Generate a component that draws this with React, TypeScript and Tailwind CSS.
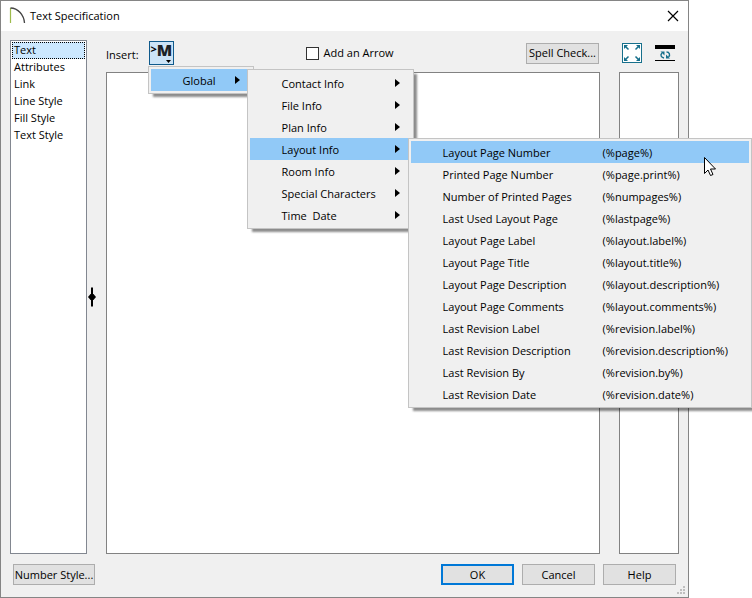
import React from "react";
import { clsx } from "clsx";

const SECTIONS = ["Text", "Attributes", "Link", "Line Style", "Fill Style", "Text Style"];

const CATEGORIES = [
  "Contact Info",
  "File Info",
  "Plan Info",
  "Layout Info",
  "Room Info",
  "Special Characters",
  "Time  Date",
];

const LAYOUT_MACROS = [
  { label: "Layout Page Number", macro: "(%page%)" },
  { label: "Printed Page Number", macro: "(%page.print%)" },
  { label: "Number of Printed Pages", macro: "(%numpages%)" },
  { label: "Last Used Layout Page", macro: "(%lastpage%)" },
  { label: "Layout Page Label", macro: "(%layout.label%)" },
  { label: "Layout Page Title", macro: "(%layout.title%)" },
  { label: "Layout Page Description", macro: "(%layout.description%)" },
  { label: "Layout Page Comments", macro: "(%layout.comments%)" },
  { label: "Last Revision Label", macro: "(%revision.label%)" },
  { label: "Last Revision Description", macro: "(%revision.description%)" },
  { label: "Last Revision By", macro: "(%revision.by%)" },
  { label: "Last Revision Date", macro: "(%revision.date%)" },
];

const MENU =
  "absolute border border-[#c4c4c4] bg-[#f0f0f0] p-[2px] shadow-[4px_4px_2px_-1px_rgba(0,0,0,0.45)]";

function SubmenuArrow() {
  return (
    <svg className="h-2 w-[5px]" viewBox="0 0 5 8" aria-hidden="true">
      <path d="M0 0L5 4L0 8Z" fill="#000" />
    </svg>
  );
}

function LayoutMacroMenu() {
  return (
    <ul role="menu" aria-label="Layout Info" className={clsx(MENU, "top-0 left-[158px] w-[344px]")}>
      {LAYOUT_MACROS.map((item, i) => (
        <li key={item.macro} role="none">
          <button
            role="menuitem"
            className={clsx(
              "grid h-[22px] w-full grid-cols-[160px_1fr] items-center pt-px pl-8 text-left whitespace-nowrap",
              i === 0 && "bg-[#91c9f7]"
            )}
          >
            <span>{item.label}</span>
            <span>{item.macro}</span>
          </button>
        </li>
      ))}
    </ul>
  );
}

function CategoryMenu() {
  return (
    <ul role="menu" aria-label="Global" className={clsx(MENU, "top-0 left-24 w-[167px]")}>
      {CATEGORIES.map((name) => {
        const open = name === "Layout Info";
        return (
          <li key={name} role="none" className="relative">
            <button
              role="menuitem"
              aria-haspopup="menu"
              aria-expanded={open}
              className={clsx(
                "flex h-[22px] w-full items-center justify-between pr-[11px] pl-8 whitespace-pre",
                open && "bg-[#91c9f7]"
              )}
            >
              <span className="pt-px">{name}</span>
              <SubmenuArrow />
            </button>
            {open && <LayoutMacroMenu />}
          </li>
        );
      })}
    </ul>
  );
}

function InsertMacro() {
  return (
    <div className="relative z-10 ml-[10px]">
      <button
        aria-label="Insert macro"
        className="relative flex h-6 w-[25px] items-start border border-[#0f5a8c] bg-[#cce4f7] pl-px"
      >
        <span className="text-[11px] leading-[14px] font-bold">&gt;</span>
        <span className="text-base leading-4 font-extrabold text-[#1b2226]">M</span>
        <svg className="absolute right-[2px] bottom-px h-[3px] w-[5px]" viewBox="0 0 5 3" aria-hidden="true">
          <path d="M0 0H5L2.500 3Z" fill="#000" />
        </svg>
      </button>
      <ul role="menu" aria-label="Insert" className={clsx(MENU, "top-[25px] -left-px w-[106px]")}>
        <li role="none" className="relative">
          <button
            role="menuitem"
            aria-haspopup="menu"
            aria-expanded={true}
            className="flex h-[22px] w-full items-center justify-between bg-[#91c9f7] pr-[11px] pl-8"
          >
            <span className="pt-px">Global</span>
            <SubmenuArrow />
          </button>
          <CategoryMenu />
        </li>
      </ul>
    </div>
  );
}

function DialogButton({
  children,
  primary,
  className,
}: {
  children: React.ReactNode;
  primary?: boolean;
  className?: string;
}) {
  return (
    <button
      className={clsx(
        "h-[21px] bg-[#e1e1e1] leading-4 whitespace-nowrap",
        primary ? "border-2 border-[#0078d7]" : "border border-[#adadad]",
        className
      )}
    >
      {children}
    </button>
  );
}

export default function App() {
  return (
    <div className="relative min-h-screen overflow-hidden bg-white pr-[63px] font-['Open_Sans','Noto_Sans',sans-serif] text-[11px] leading-4 text-black">
      <div
        role="dialog"
        aria-label="Text Specification"
        className="flex min-h-screen flex-col border border-[#858585] bg-[#f0f0f0]"
      >
        <header className="flex h-[30px] items-center bg-white pr-[9px] pl-2">
          <svg className="h-[18px] w-[18px]" viewBox="0 0 18 18" aria-hidden="true">
            <path d="M1.500 1V16" stroke="#9dbb4c" strokeWidth="1.200" />
            <path d="M1.500 1C9 1 15 8 15.500 16" fill="none" stroke="#444" strokeWidth="1.300" />
          </svg>
          <h1 className="ml-[3px] grow">Text Specification</h1>
          <button aria-label="Close">
            <svg className="h-3 w-3" viewBox="0 0 12 12" aria-hidden="true">
              <path d="M1 1L11 11M11 1L1 11" stroke="#000" strokeWidth="1.200" />
            </svg>
          </button>
        </header>

        <div className="flex grow px-[9px] pt-[9px]">
          <ul role="listbox" aria-label="Pages" className="w-[77px] border border-[#828790] bg-white p-px">
            {SECTIONS.map((name, i) => (
              <li
                key={name}
                role="option"
                aria-selected={i === 0}
                className={clsx(
                  "h-[17px] border border-dotted pl-px leading-[13px]",
                  i === 0 ? "border-black bg-[#cce8ff]" : "border-transparent"
                )}
              >
                {name}
              </li>
            ))}
          </ul>

          <div role="separator" aria-orientation="vertical" className="flex w-[19px] items-center pl-px">
            <svg className="h-5 w-2" viewBox="0 0 8 20" aria-hidden="true">
              <path d="M4 0.500V19.500" stroke="#000" strokeWidth="2" />
              <path d="M0 10L2.500 7H5.500L8 10L5.500 13H2.500Z" fill="#000" />
            </svg>
          </div>

          <div className="flex grow flex-col">
            <div className="flex h-8 items-start pt-px">
              <div className="flex grow items-center">
                <span className="pt-1">Insert:</span>
                <InsertMacro />
                <label className="ml-[132px] flex items-center gap-[5px]">
                  <input
                    type="checkbox"
                    className="h-[13px] w-[13px] appearance-none border border-[#333] bg-white"
                  />
                  Add an Arrow
                </label>
                <DialogButton className="ml-auto w-[73px]">Spell Check...</DialogButton>
              </div>
              <div className="flex w-20 items-start gap-[13px] pt-[2px] pl-[23px]">
                <button aria-label="Fill window">
                  <svg className="block h-5 w-5" viewBox="0 0 20 20" aria-hidden="true">
                    <rect x="0.500" y="0.500" width="19" height="19" fill="#fff" stroke="#17708c" />
                    <path
                      d="M2 2H6L2 6ZM18 2V6L14 2ZM2 18V14L6 18ZM18 18H14L18 14Z"
                      fill="#17708c"
                    />
                    <path
                      d="M3 3L6.500 6.500M17 3L13.500 6.500M3 17L6.500 13.500M17 17L13.500 13.500"
                      stroke="#17708c"
                      strokeWidth="1.500"
                    />
                  </svg>
                </button>
                <button aria-label="Reverse colors" className="pt-[2px]">
                  <svg className="block h-4 w-5" viewBox="0 0 20 16" aria-hidden="true">
                    <path d="M0 2H20" stroke="#000" strokeWidth="4" />
                    <path d="M0 15.500H20" stroke="#000" />
                    <path
                      d="M9 13C6 12.500 5 10 7 8M11.500 7C14.500 7 15.500 10 13.500 12"
                      fill="none"
                      stroke="#17708c"
                      strokeWidth="1.400"
                    />
                    <path d="M5.500 6.500H9.500V10.500ZM15 13.500H11V9.500Z" fill="#17708c" />
                  </svg>
                </button>
              </div>
            </div>
            <div className="flex grow gap-[19px]">
              <textarea
                aria-label="Text"
                className="grow resize-none border border-[#828282] bg-white outline-none"
              />
              <div className="w-[60px] border border-[#828282] bg-white" />
            </div>
          </div>
        </div>

        <footer className="relative flex gap-2 pt-[10px] pr-3 pb-3 pl-3">
          <DialogButton className="mr-auto w-[82px]">Number Style...</DialogButton>
          <DialogButton primary className="w-[73px]">
            OK
          </DialogButton>
          <DialogButton className="w-[73px]">Cancel</DialogButton>
          <DialogButton className="w-[73px]">Help</DialogButton>
          <svg
            className="absolute right-[2px] bottom-[2px] h-[9px] w-[9px]"
            viewBox="0 0 9 9"
            aria-hidden="true"
          >
            <path
              d="M6 0h2v2h-2zM3 3h2v2h-2zM6 3h2v2h-2zM0 6h2v2h-2zM3 6h2v2h-2zM6 6h2v2h-2z"
              fill="#bfbfbf"
            />
          </svg>
        </footer>
      </div>

      {/* mouse pointer */}
      <svg className="absolute top-[157px] left-[704px] z-20 h-5 w-3" viewBox="0 0 12 20" aria-hidden="true">
        <path
          d="M0.500 0.500V16.500L4 13L6.500 18.500L9 17.500L6.500 12H11.500Z"
          fill="#fff"
          stroke="#000"
        />
      </svg>
    </div>
  );
}
